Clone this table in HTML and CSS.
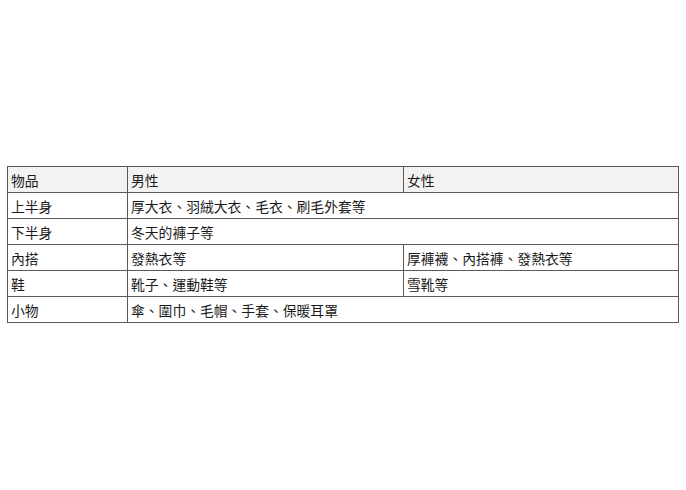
FILE: index.html
```html
<!DOCTYPE html>
<html lang="zh-Hant">
<head>
<meta charset="utf-8">
<link rel="stylesheet" href="styles.css">
</head>
<body>
<div class="page">
<table class="items">
<colgroup><col class="c1"><col class="c2"><col class="c3"></colgroup>
<thead>
<tr><th>物品</th><th>男性</th><th>女性</th></tr>
</thead>
<tbody>
<tr><td>上半身</td><td colspan="2">厚大衣、羽絨大衣、毛衣、刷毛外套等</td></tr>
<tr><td>下半身</td><td colspan="2">冬天的褲子等</td></tr>
<tr><td>內搭</td><td>發熱衣等</td><td>厚褲襪、內搭褲、發熱衣等</td></tr>
<tr><td>鞋</td><td>靴子、運動鞋等</td><td>雪靴等</td></tr>
<tr><td>小物</td><td colspan="2">傘、圍巾、毛帽、手套、保暖耳罩</td></tr>
</tbody>
</table>
</div>
</body>
</html>
```
FILE: styles.css
```css
html, body {
  margin: 0;
  padding: 0;
  background: #ffffff;
}
.page {
  height: 489px;
  display: flex;
  align-items: center;
  padding-left: 7px;
}
.items {
  border-collapse: collapse;
  width: 671px;
  table-layout: fixed;
  font-family: "Noto Sans CJK JP", "Noto Sans CJK TC", sans-serif;
  font-size: 13.8px;
  color: #1a1a1a;
}
.c1 { width: 120px; }
.c2 { width: 276px; }
.c3 { width: 275px; }
.items th, .items td {
  border: 1px solid #5a5a5a;
  height: 25px;
  padding: 0 3px;
  text-align: left;
  font-weight: normal;
  vertical-align: middle;
  line-height: 18px;
  white-space: nowrap;
}
.items th {
  background: #f2f2f2;
}
```
